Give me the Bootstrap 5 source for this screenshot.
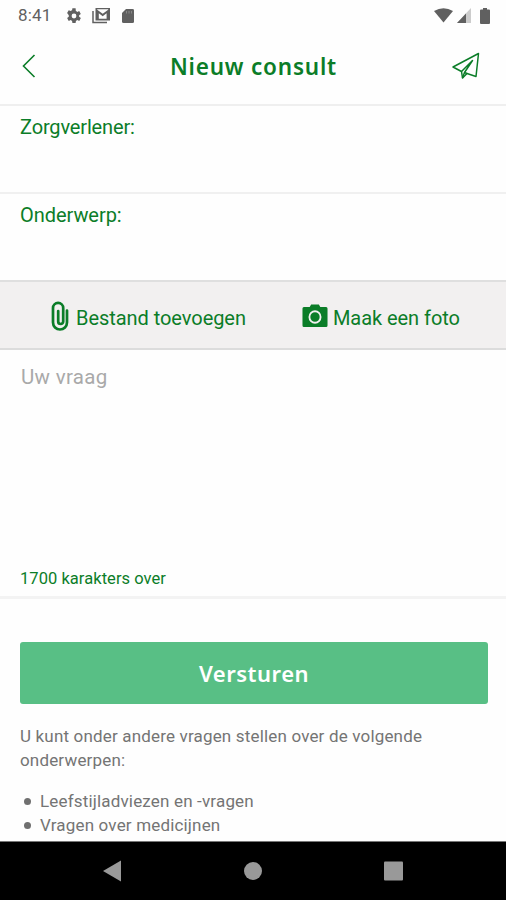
<!DOCTYPE html>
<html lang="nl">
<head>
<meta charset="utf-8">
<meta name="viewport" content="width=device-width, initial-scale=1">
<title>Nieuw consult</title>
<link href="https://cdn.jsdelivr.net/npm/bootstrap@5.3.0/dist/css/bootstrap.min.css" rel="stylesheet">
<style>
  body { font-family: Roboto, "Liberation Sans", sans-serif; color: #747474; background: #fefefe; }
  svg { display: block; flex: none; }
  .screen { height: 900px; }
  .green { color: #0b7d28; }
  .status { height: 31px; padding: 0 16px 0 18px; color: #606060; }
  .clock { font-size: 17px; line-height: 31px; width: 48px; letter-spacing: .2px; }
  .topbar { height: 75px; padding: 0 26px 4px 22px; border-bottom: 2px solid #efefef; }
  .title { font: 600 22.5px/30px "Noto Sans", sans-serif; letter-spacing: .8px; margin: 0; padding: 2px 0 0 5px; }
  .field { height: 88px; padding: 9px 20px; font-size: 20px; line-height: 24px; border-bottom: 2px solid #f0f0f0; letter-spacing: -.15px; }
  .field-last { height: 86px; border-bottom: 0; letter-spacing: -.05px; }
  .tools { height: 70px; padding-left: 51px; background: #f2f0f0; border-top: 2px solid #dfdfdf; border-bottom: 2px solid #dcdcdc; font-size: 20px; }
  .tools button { font-size: inherit; border: 0; background: none; padding: 6px 0 0; line-height: 24px; letter-spacing: -.05px; }
  .photo { margin-left: 56px; }
  .clip { margin: -5px 7px 0 0; }
  .camera { margin: -5px 5px 0 0; }
  .question { height: 249px; padding: 15px 20px 7px; border-bottom: 3px solid #f3f3f3; }
  .hint { font-size: 20.5px; line-height: 24px; color: #a9a9a9; padding-left: 1px; letter-spacing: .3px; }
  .counter { font-size: 16.5px; line-height: 20px; letter-spacing: .05px; }
  .send { height: 62px; border: 0; border-radius: 3px; background: #58bf85; color: #fff; font: 600 22px/62px "Noto Sans", sans-serif; letter-spacing: .5px; padding: 0; }
  .send:hover { background: #4fb47b; color: #fff; }
  .info { padding: 43px 18px 0 20px; font-size: 17px; line-height: 24px; letter-spacing: .17px; }
  .info ul { padding-left: 20px; margin: 17px 0 0; list-style: none; }
  .info li { display: flex; align-items: center; margin-left: -16px; }
  .info li::before { content: ""; width: 7px; height: 7px; border-radius: 50%; background: #707070; margin-right: 9px; }
  .sdcard { margin-left: 1px; }
  .battery { margin-left: 9px; }
  .sysnav { height: 59px; background: #000; border-top: 1px solid #777; padding: 0 102px; }
</style>
</head>
<body>
<div class="screen d-flex flex-column overflow-hidden">
  <div class="status d-flex align-items-center">
    <span class="clock">8:41</span>
    <svg width="16" height="16" viewBox="3 2 20 20" fill="currentColor"><path fill-rule="evenodd" d="M19.400 13a7.500 7.500 0 0 0 0-2l2.100-1.600-2-3.500-2.500 1a7.500 7.500 0 0 0-1.700-1L15 2.200h-4l-.4 2.700a7.500 7.500 0 0 0-1.700 1l-2.500-1-2 3.500L6.500 11a7.500 7.500 0 0 0 0 2l-2.100 1.600 2 3.500 2.500-1c.5.4 1.100.8 1.700 1l.4 2.700h4l.4-2.700c.6-.2 1.200-.6 1.700-1l2.500 1 2-3.500zM13 9a3 3 0 1 1 0 6 3 3 0 0 1 0-6z"/></svg>
    <svg class="ms-2 me-2" width="22" height="18" viewBox="0 0 22 18"><path d="M3 4v11.500h14" fill="none" stroke="currentColor" stroke-width="1.500"/><path fill="currentColor" fill-rule="evenodd" d="M5.500 1h14.500v12.500H5.500zM7.200 2.200v.6l5.500 3.900 5.500-3.900v-.6zM8.800 6.300v5.500h7.800V6.300l-3.900 2.900z"/></svg>
    <svg class="sdcard" width="14" height="16" viewBox="0 0 14 16"><path fill="currentColor" d="M5 1h6.500Q13 1 13 2.300v11.400q0 1.300-1.500 1.300h-9Q1 15 1 13.700V5z"/><path d="M5.500 3v2.500M8 3v2.500M10.500 3v2.500" stroke="#888" stroke-width="1"/></svg>
    <svg class="ms-auto" width="19" height="15" viewBox="0 0 19 15"><path fill="currentColor" d="M0 3Q9.500-2.500 19 3L9.500 14.500z"/></svg>
    <svg class="ms-1" width="14" height="15" viewBox="0 0 14 15"><path fill="#ccc" d="M14 0v15H0z"/><path fill="currentColor" d="M9 5.400V15H0z"/></svg>
    <svg class="battery" width="10" height="16" viewBox="0 0 10 16"><path fill="currentColor" d="M3 0h4v1.500h2q1 0 1 1V15q0 1-1 1H1q-1 0-1-1V2.500q0-1 1-1h2z"/></svg>
  </div>

  <header class="topbar green d-flex align-items-center justify-content-between">
    <svg width="28" height="24" viewBox="0 0 28 24" fill="none" stroke="currentColor" stroke-width="1.600"><path d="M12.500 1 1.500 12l11 11"/></svg>
    <h1 class="title">Nieuw consult</h1>
    <svg width="28" height="28" viewBox="0 0 28 28" fill="none" stroke="currentColor" stroke-width="1.500" stroke-linejoin="round"><path d="M1 15 26.500 1.500 24 24.500 15 21.500 10.500 26 9.500 19.500z"/><path d="M9.500 19.500 20.500 8.500 12.500 20.500 10.500 26M12.500 20.500 15 21.500"/></svg>
  </header>

  <main>
    <div class="field green">Zorgverlener:</div>
    <div class="field field-last green">Onderwerp:</div>
    <div class="tools d-flex">
      <button type="button" class="green d-flex align-items-center">
        <svg class="clip" width="18" height="30" viewBox="0 0 18 30" fill="none" stroke="currentColor" stroke-width="2.700" stroke-linecap="round"><path d="M16 9.500v12a7 7 0 0 1-14 0V7a5 5 0 0 1 10.200 0v13.500a2.500 2.500 0 0 1-5 0V10"/></svg>
        Bestand toevoegen
      </button>
      <button type="button" class="photo green d-flex align-items-center">
        <svg class="camera" width="26" height="24" viewBox="0 0 27 24" preserveAspectRatio="none"><path fill="currentColor" d="M8 3 9.500.5h8L19 3h6q1.500 0 1.500 1.500v17q0 1.500-1.500 1.500H2Q.5 23 .5 21.500v-17Q.5 3 2 3z"/><circle cx="13.500" cy="13" r="5.800" fill="none" stroke="#f2f0f0" stroke-width="1.900"/></svg>
        Maak een foto
      </button>
    </div>
    <div class="question d-flex flex-column justify-content-between">
      <div class="hint">Uw vraag</div>
      <div class="counter green">1700 karakters over</div>
    </div>
    <div class="info">
      <button type="button" class="btn send w-100">Versturen</button>
      <p class="mb-0 mt-3 pt-1">U kunt onder andere vragen stellen over de volgende<br>onderwerpen:</p>
      <ul>
        <li>Leefstijladviezen en -vragen</li>
        <li>Vragen over medicijnen</li>
      </ul>
    </div>
  </main>

  <nav class="sysnav mt-auto d-flex align-items-center justify-content-between">
    <svg width="19" height="22" viewBox="0 0 19 22" fill="#999"><path d="M19 .5v21L1 11z"/></svg>
    <svg width="18" height="18" viewBox="0 0 18 18" fill="#999"><circle cx="9" cy="9" r="9"/></svg>
    <svg width="20" height="20" viewBox="0 0 20 20" fill="#999"><rect width="19" height="19" x="0" y=".5" rx="1"/></svg>
  </nav>
</div>
<script src="https://cdn.jsdelivr.net/npm/bootstrap@5.3.0/dist/js/bootstrap.bundle.min.js"></script>
</body>
</html>
